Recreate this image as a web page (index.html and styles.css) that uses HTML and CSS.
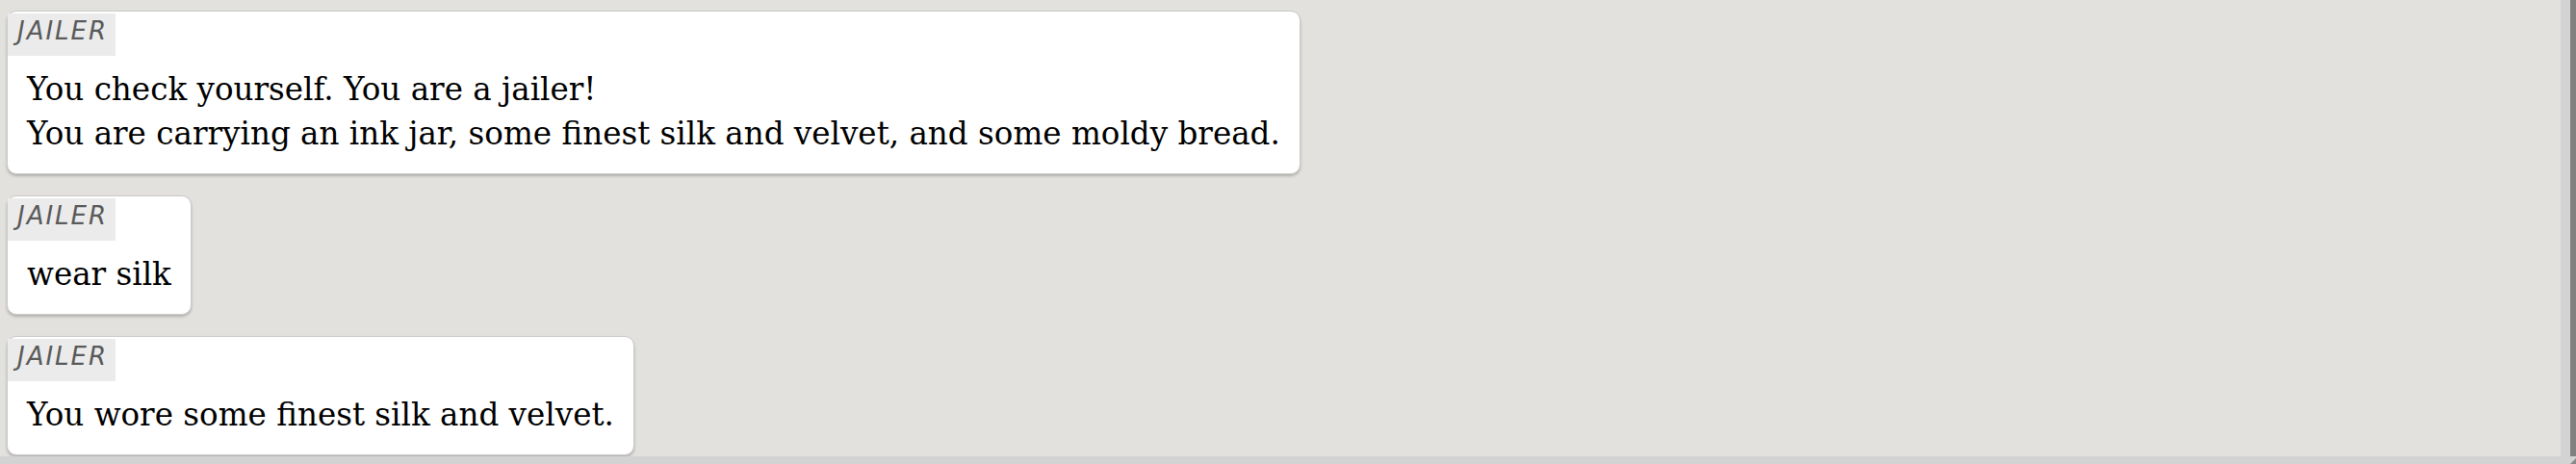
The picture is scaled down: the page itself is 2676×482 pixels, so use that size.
FILE: index.html
```html
<!DOCTYPE html>
<html lang="en">
<head>
<meta charset="utf-8">
<title>Jailer log</title>
<link rel="stylesheet" href="styles.css">
</head>
<body>
<div class="frame">
  <main class="log">
    <section class="entry">
      <div class="speaker">JAILER</div>
      <div class="message">You check yourself. You are a jailer!<br>You are carrying an ink jar, some finest silk and velvet, and some moldy bread.</div>
    </section>
    <section class="entry">
      <div class="speaker">JAILER</div>
      <div class="message">wear silk</div>
    </section>
    <section class="entry">
      <div class="speaker">JAILER</div>
      <div class="message">You wore some finest silk and velvet.</div>
    </section>
  </main>
  <div class="vtrack"></div>
  <div class="vthumb"></div>
  <div class="htrack"><div class="grip"></div></div>
</div>
</body>
</html>
```

FILE: styles.css
```css
html, body {
  margin: 0;
  padding: 0;
  height: 100%;
  overflow: hidden;
}

body {
  background: #e2e1de;
  font-family: "DejaVu Serif", "Liberation Serif", serif;
}

.frame {
  display: grid;
  grid-template-columns: 1fr 10px 6px;
  grid-template-rows: 474px 8px;
  height: 482px;
}

.log {
  grid-column: 1;
  grid-row: 1;
  overflow: hidden;
  background: #e2e1de;
  padding: 11px 0 0 7px;
  display: flex;
  flex-direction: column;
  align-items: flex-start;
  gap: 22px;
  box-sizing: border-box;
}

.entry {
  flex: none;
  background: #ffffff;
  border: 1px solid #cbcbcb;
  border-radius: 10px;
  box-shadow: 0 2px 3px rgba(0, 0, 0, 0.22);
  padding-top: 2px;
  display: flex;
  flex-direction: column;
  align-items: flex-start;
}

.speaker {
  background: #ebebeb;
  color: #5a5a5a;
  font-family: "DejaVu Sans", "Liberation Sans", sans-serif;
  font-weight: 200;
  font-style: italic;
  font-size: 26px;
  letter-spacing: 2px;
  line-height: 36px;
  height: 44px;
  box-sizing: border-box;
  padding: 0 8px 8px 10px;
}

.message {
  color: #000;
  font-size: 32.6px;
  line-height: 46px;
  margin-top: 12px;
  padding: 0 20px 18px 20px;
}

.vtrack {
  grid-column: 2;
  grid-row: 1;
  background: #d3d3d3;
}

.vthumb {
  grid-column: 3;
  grid-row: 1;
  background: #808080;
}

.htrack {
  grid-column: 1 / 4;
  grid-row: 2;
  background: #d3d3d3;
  display: flex;
  justify-content: flex-end;
  align-items: flex-end;
}

.grip {
  width: 0;
  height: 0;
  border-left: 6px solid transparent;
  border-bottom: 6px solid #8a8a8a;
}
```
